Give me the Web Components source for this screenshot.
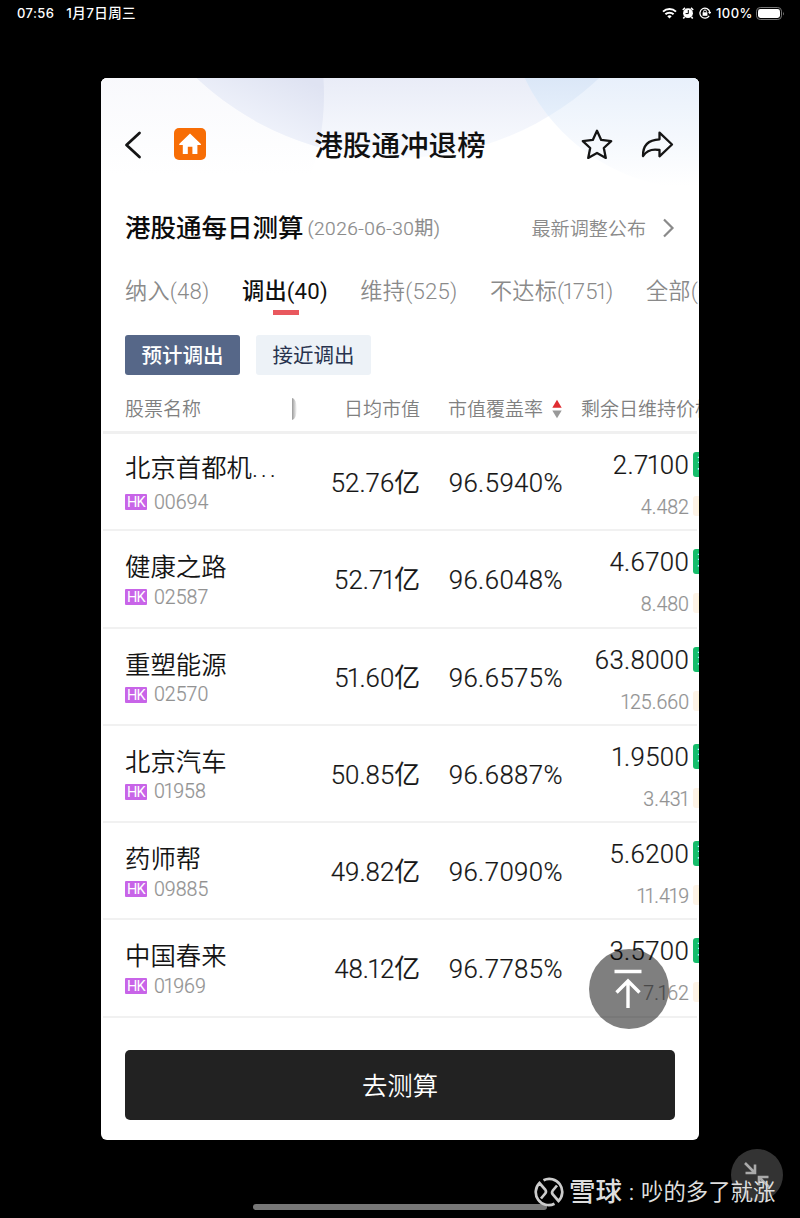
<!DOCTYPE html>
<html lang="zh-CN">
<head>
<meta charset="utf-8">
<title>港股通冲退榜</title>
<style>
  body {
    margin: 0;
    background: #000;
    font-family: Roboto, "Noto Sans CJK SC", sans-serif;
  }
</style>
</head>
<body>
<tablet-screen></tablet-screen>

<script>
const STOCKS = [
  { name: '北京首都机...', code: '00694', cap: '52.76亿', rate: '96.5940%', price: '2.7100', limit: '4.482' },
  { name: '健康之路', code: '02587', cap: '52.71亿', rate: '96.6048%', price: '4.6700', limit: '8.480' },
  { name: '重塑能源', code: '02570', cap: '51.60亿', rate: '96.6575%', price: '63.8000', limit: '125.660' },
  { name: '北京汽车', code: '01958', cap: '50.85亿', rate: '96.6887%', price: '1.9500', limit: '3.431' },
  { name: '药师帮', code: '09885', cap: '49.82亿', rate: '96.7090%', price: '5.6200', limit: '11.419' },
  { name: '中国春来', code: '01969', cap: '48.12亿', rate: '96.7785%', price: '3.5700', limit: '7.162' }
];

// shared by the table head and the rows
const TABLE_COLUMNS = '160px 135px 143px 126px 28px';

// proportional ones: pull the neighbours of each 1 closer
const NARROW_ONE = '.one { margin: 0 -0.06em 0 -0.07em; }';
const narrowOnes = (text) => text.replace(/1/g, '<span class="one">1</span>');

function define (name, html, setup) {
  const template = document.createElement('template');
  template.innerHTML = html;
  window.customElements.define(name, class extends HTMLElement {
    constructor () {
      super();
      this.attachShadow({ mode: 'open' });
      this.shadowRoot.appendChild(template.content.cloneNode(true));
    }
    connectedCallback () {
      if (setup) setup(this, this.shadowRoot);
    }
  });
}

define('status-bar', `
  <style>
    :host { display: flex; align-items: center; justify-content: space-between; height: 26px; padding: 0 15px 0 17px; color: #fff; font: 500 13px/26px Inter, "Noto Sans CJK SC", sans-serif; }
    div { display: flex; align-items: center; }
    .left { gap: 12px; letter-spacing: 0.4px; }
    .date { font-size: 13.5px; }
    .right { gap: 5px; }
    .percent { letter-spacing: 0.5px; }
    svg { display: block; }
    .battery { margin-left: -2px; }
  </style>
  <div class="left"><span>07:56</span><span class="date">1月7日周三</span></div>
  <div class="right">
    <svg width="15" height="12" viewBox="0 0 15 12" fill="none" stroke="#fff" stroke-width="2">
      <path d="M1 4.6a9.3 9.3 0 0 1 13 0M3.4 7.3a5.9 5.9 0 0 1 8.2 0"/><path d="M7.5 11.4 5.3 9.2a3.2 3.2 0 0 1 4.4 0z" fill="#fff" stroke="none"/>
    </svg>
    <svg width="12" height="12" viewBox="0 0 12 12">
      <circle cx="6" cy="6.2" r="4.9" fill="#fff"/><path d="M.8 3 3 .9M11.2 3 9 .9M2.5 10 1.3 11.5M9.5 10l1.2 1.5" stroke="#fff" stroke-width="1.6"/><path d="M6.3 3v3.6H3.6" stroke="#000" fill="none"/>
    </svg>
    <svg width="12" height="12" viewBox="0 0 12 12" fill="none" stroke="#fff">
      <path d="M10.2 8.8a5 5 0 1 1 .6-3.8" stroke-width="1.3"/><path d="m9 5 1.8 2.2L12.2 5z" fill="#fff" stroke="none"/><path d="M3.6 5.3h4.8v3.5H3.6z" fill="#fff" stroke="none"/><path d="M4.6 5.5V4.4a1.4 1.4 0 0 1 2.8 0v1.1"/>
    </svg>
    <span class="percent">100%</span>
    <svg class="battery" width="29" height="13" viewBox="0 0 29 13">
      <rect x=".5" y=".5" width="25" height="12" rx="3.7" fill="none" stroke="#777"/><rect x="2" y="2" width="22" height="9" rx="2.4" fill="#fff"/><path d="M27 4.5q1.7 2 0 4z" fill="#777"/>
    </svg>
  </div>
`);

define('nav-bar', `
  <style>
    :host { position: relative; display: block; height: 134px; }
    .glow { position: absolute; top: 0; left: 0; }
    nav { position: relative; display: grid; grid-template-columns: 190px 1fr 190px; align-items: center; height: 134px; }
    .left, .right { display: flex; align-items: center; }
    .left { padding-left: 22px; gap: 30px; }
    .right { justify-content: flex-end; gap: 26px; padding-right: 25px; }
    h1 { margin: 0; padding-top: 2px; text-align: center; font-size: 28.6px; font-weight: 500; line-height: 40px; color: #111; white-space: nowrap; }
    svg { display: block; }
    .home { margin-top: -2px; }
  </style>
  <svg class="glow" width="598" height="134" viewBox="101 78 598 134">
    <defs>
      <linearGradient id="base" x2="0" y2="1"><stop stop-color="#f1f1f9"/><stop offset=".3" stop-color="#f3f4fa"/><stop offset=".66" stop-color="#fff"/></linearGradient>
      <linearGradient id="mid" gradientUnits="userSpaceOnUse" x1="400" y1="78" x2="400" y2="160"><stop stop-color="#e9ecf7"/><stop offset="1" stop-color="#fafcff"/></linearGradient>
      <linearGradient id="lens" gradientUnits="userSpaceOnUse" x1="300" y1="78" x2="270" y2="150"><stop stop-color="#dfe3f2"/><stop offset="1" stop-color="#f3f6fd"/></linearGradient>
      <linearGradient id="side" gradientUnits="userSpaceOnUse" x1="600" y1="78" x2="600" y2="186"><stop stop-color="#e8f0fb"/><stop offset="1" stop-color="#fff"/></linearGradient>
      <linearGradient id="cross" gradientUnits="userSpaceOnUse" x1="550" y1="78" x2="550" y2="124"><stop stop-color="#dbe7f7"/><stop offset="1" stop-color="#e8f1fc"/></linearGradient>
      <clipPath id="leftClip"><circle cx="74" cy="95" r="250"/></clipPath>
      <clipPath id="rightClip"><circle cx="700" cy="-5" r="194"/></clipPath>
    </defs>
    <path d="M101 78h598v134H101z" fill="#fff"/>
    <circle cx="74" cy="95" r="250" fill="url(#base)"/>
    <path d="M101 140h260v72H101z" fill="#fff" opacity=".2"/>
    <circle cx="398" cy="-135" r="293" fill="url(#mid)"/>
    <circle cx="398" cy="-135" r="293" fill="url(#lens)" clip-path="url(#leftClip)"/>
    <circle cx="700" cy="-5" r="194" fill="url(#side)"/>
    <circle cx="398" cy="-135" r="293" fill="url(#cross)" clip-path="url(#rightClip)"/>
  </svg>
  <nav>
    <div class="left">
      <svg width="21" height="28" viewBox="0 0 21 28" fill="none" stroke="#151515" stroke-width="2.8" stroke-linecap="round" stroke-linejoin="round"><path d="M16.5 2 3.5 14l13 12"/></svg>
      <svg class="home" width="32" height="32" viewBox="0 0 32 32"><rect width="32" height="32" rx="5" fill="#f76d05"/><path d="M16 5.5 5.2 16q-.5 1 .6 1h3v9h5v-7.3h4.6V26h5v-9h3q1 0 .5-1z" fill="#fff"/></svg>
    </div>
    <h1>港股通冲退榜</h1>
    <div class="right">
      <svg width="34" height="34" viewBox="0 0 34 34" fill="none" stroke="#151515" stroke-width="2.3" stroke-linejoin="round"><path d="m17 2.700 4.200 9.200 10 1.200-7.400 6.900 2 9.900-8.800-4.900-8.800 4.900 2-9.900-7.400-6.900 10-1.200z"/></svg>
      <svg width="34" height="30" viewBox="0 0 34 30" fill="none" stroke="#151515" stroke-width="2.3" stroke-linejoin="round"><path d="M19.500 2.700 32 14.500 19.500 26.300V20Q8.500 17.800 3 26 2.600 10 19.500 9.300z"/></svg>
    </div>
  </nav>
`);

define('section-title', `
  <style>
    :host { display: flex; align-items: center; height: 32px; padding: 0 24px; color: #8a8a8a; font-size: 19.1px; font-weight: 350; white-space: nowrap; }
    h2 { margin: 0 4px 0 0; color: #0c0c0c; font-size: 25.5px; font-weight: 500; line-height: 32px; }
    .date { flex: 1; padding-top: 1px; letter-spacing: 0.45px; line-height: 32px; -webkit-text-stroke: 0.2px; }
    svg { margin-left: 15px; }
  </style>
  <h2><slot></slot></h2>
  <span class="date"><slot name="date"></slot></span>
  <slot name="link"></slot>
  <svg width="14" height="20" viewBox="0 0 14 20" fill="none" stroke="#8a8a8a" stroke-width="2.2"><path d="m3 1.500 8.500 8.500L3 18.500"/></svg>
`);

define('tab-strip', `
  <style>
    :host { display: flex; gap: 32.5px; height: 62px; margin: 16px 0 0 24px; overflow: hidden; font-size: 22.2px; font-weight: 350; letter-spacing: 0.2px; line-height: 62px; color: #8a8a8a; white-space: nowrap; }
  </style>
  <slot></slot>
`);

define('tab-item', `
  <style>
    :host { display: flex; flex: none; flex-direction: column; align-items: center; }
    :host([active]) { color: #111; font-weight: 450; }
    .label { height: 50px; }
    :host([active]) .bar { width: 26px; height: 5px; margin-left: 2px; background: #e9585e; }
    .one { margin: 0 -0.09em 0 -0.1em; }
  </style>
  <span class="label"></span><span class="bar"></span>
`, (el, root) => {
  root.querySelector('.label').innerHTML = narrowOnes(el.getAttribute('label'));
});

define('filter-chip', `
  <style>
    :host { display: block; width: 115px; height: 40px; border-radius: 3px; background: #edf2f7; color: #28324e; font-size: 20.5px; line-height: 43px; text-align: center; white-space: nowrap; }
    :host([active]) { background: #566788; color: #fff; font-weight: 500; }
  </style>
  <slot></slot>
`);

define('table-head', `
  <style>
    :host { display: grid; grid-template-columns: ${ TABLE_COLUMNS }; align-items: center; height: 59px; margin: 0 2px; padding: 12px 0 0 22px; box-sizing: border-box; border-bottom: 3px solid #f0f0f0; color: #808080; font-size: 19px; font-weight: 350; line-height: 44px; white-space: nowrap; }
    span { padding-top: 1px; }
    .cap { display: flex; align-items: center; justify-content: space-between; }
    .edge { width: 5px; height: 22px; margin: -2px 0 0 7px; background: linear-gradient(90deg, #999, #fff); border-radius: 0 100% 100% 0 / 0 50% 50% 0; }
    .rate { display: flex; align-items: center; justify-content: flex-end; gap: 9px; padding-right: 1px; }
    svg { margin-top: -3px; }
    .price { padding-left: 18px; }
  </style>
  <span>股票名称</span>
  <span class="cap"><i class="edge"></i>日均市值</span>
  <span class="rate">市值覆盖率<svg width="10" height="20" viewBox="0 0 10 20"><path d="m5 .8 4.700 8H.3z" fill="#e02d32"/><path d="m5 19.200 4.700-7.700H.3z" fill="#999"/></svg></span>
  <span class="price">剩余日维持价格</span>
`);

define('stock-row', `
  <style>
    :host { display: grid; grid-template-columns: ${ TABLE_COLUMNS }; height: 97.25px; margin: 0 2px; padding-left: 22px; box-sizing: border-box; border-bottom: 2px solid #f1f1f1; color: #151515; font-size: 25.8px; font-weight: 350; white-space: nowrap; }
    .stock { padding-top: 20px; }
    .name { font-size: 25.4px; line-height: 32px; }
    .dots { letter-spacing: 2.8px; }
    .id { display: flex; align-items: center; height: 20px; margin-top: 4px; gap: 7px; color: #929292; font-size: 19.6px; line-height: 20px; }
    :host(:first-of-type) .stock { padding-top: 18px; }
    :host(:first-of-type) .id { margin-top: 8px; }
    .code { padding-top: 1px; }
    .hk { width: 22px; height: 16px; border-radius: 1px; background: #c864e8; color: #fff; font-size: 14.5px; font-weight: 400; letter-spacing: -0.6px; line-height: 17px; text-align: center; }
    .number, .price, .limit, .code { -webkit-text-stroke: 0.2px; }
    .number { text-align: right; line-height: 99px; }
    .rate { letter-spacing: 0.4px; }
    .prices { padding-top: 12px; text-align: right; }
    .price { letter-spacing: 0.3px; line-height: 38px; }
    .limit { margin-top: 8px; color: #929292; font-size: 19.6px; line-height: 32px; }
    .marks { padding: 18px 0 0 4px; }
    .mark { width: 25px; height: 25px; border-radius: 3px; background: #16bd6b; color: #fff; font-size: 17px; font-weight: 400; line-height: 25px; text-align: center; }
    .mark.last { height: 20px; margin-top: 19px; background: #fdf3e6; color: #a06b3c; font-size: 15px; line-height: 20px; }
    ${ NARROW_ONE }
  </style>
  <div class="stock">
    <div class="name"></div>
    <div class="id"><span class="hk">HK</span><span class="code"></span></div>
  </div>
  <div class="number cap"></div>
  <div class="number rate"></div>
  <div class="prices"><div class="price"></div><div class="limit"></div></div>
  <div class="marks"><div class="mark">现</div><div class="mark last">限</div></div>
`, (el, root) => {
  const stock = el.stock;
  root.querySelector('.name').innerHTML = stock.name.replace('...', '<span class="dots">...</span>');
  ['code', 'cap', 'rate', 'price', 'limit'].forEach((key) => {
    root.querySelector(`.${ key }`).innerHTML = narrowOnes(stock[key]);
  });
});

define('stock-table', `
  <style>
    :host { display: block; }
  </style>
  <table-head></table-head>
  <section></section>
`, (el, root) => {
  STOCKS.forEach((stock) => {
    const row = document.createElement('stock-row');
    row.stock = stock;
    root.querySelector('section').appendChild(row);
  });
});

define('action-button', `
  <style>
    :host { display: block; margin: 32.5px 24px 0; }
    button { display: block; width: 100%; height: 70px; padding: 0; border: 0; border-radius: 5px; background: #222; color: #fff; font: 350 25.4px/73px Roboto, "Noto Sans CJK SC", sans-serif; }
  </style>
  <button><slot></slot></button>
`);

define('back-to-top', `
  <style>
    :host { position: absolute; left: 488px; top: 871px; width: 80px; height: 80px; border-radius: 50%; background: rgba(0, 0, 0, 0.5); }
    svg { display: block; }
  </style>
  <svg width="80" height="80" viewBox="0 0 80 80" fill="none" stroke="#fff" stroke-width="3.4"><path d="M25.500 22.500h27M39 59V32M27.500 43.500 39 32 50.500 43.500"/></svg>
`);

define('app-card', `
  <style>
    :host { position: relative; display: block; width: 598px; height: 1062px; margin: 52px auto 0; overflow: hidden; border-radius: 6px; background: #fff; }
    .chips { display: flex; gap: 16px; margin: 13px 0 0 24px; }
  </style>
  <nav-bar></nav-bar>
  <section-title>港股通每日测算<span slot="date">(2026-06-30期)</span><span slot="link">最新调整公布</span></section-title>
  <tab-strip>
    <tab-item label="纳入(48)"></tab-item>
    <tab-item label="调出(40)" active></tab-item>
    <tab-item label="维持(525)"></tab-item>
    <tab-item label="不达标(1751)"></tab-item>
    <tab-item label="全部(2364)"></tab-item>
  </tab-strip>
  <div class="chips"><filter-chip active>预计调出</filter-chip><filter-chip>接近调出</filter-chip></div>
  <stock-table></stock-table>
  <action-button>去测算</action-button>
  <back-to-top></back-to-top>
`);

// floats over the bottom edge of the screen
define('screen-overlay', `
  <style>
    .home { position: absolute; left: 253px; top: 1204px; width: 294px; height: 6px; border-radius: 3px; background: #777; }
    .shrink { position: absolute; left: 731px; top: 1149px; width: 52px; height: 52px; border-radius: 50%; background: #333; }
    .credit { position: absolute; left: 534px; top: 1176px; display: flex; align-items: center; height: 32px; color: #ddd; font-size: 22.4px; line-height: 32px; white-space: nowrap; }
    .brand { margin-left: 5px; font-size: 26.5px; font-weight: 500; }
    .colon { width: 19px; text-align: center; }
  </style>
  <div class="home"></div>
  <svg class="shrink" viewBox="0 0 52 52" fill="none" stroke="#aaa" stroke-width="2.6"><path d="m14 14 9 9M24 15.500V24h-9.500M38 38l-9-9M28 36.500V28h9.500"/></svg>
  <div class="credit">
    <svg width="30" height="30" viewBox="0 0 30 30" fill="none" stroke="#ccc" stroke-width="2.7"><path d="M9.500 3.200A13 13 0 0 1 24.500 24L18.800 17.500q-1.500-2 0-4l4.200-5M20.500 26.800A13 13 0 0 1 5.500 6l5.700 6.500q1.500 2 0 4L7 21.500"/></svg>
    <span class="brand">雪球</span><span class="colon">:</span><span>吵的多了就涨</span>
  </div>
`);

define('tablet-screen', `
  <style>
    :host { position: relative; display: block; height: 1218px; overflow: hidden; background: #000; }
  </style>
  <status-bar></status-bar>
  <app-card></app-card>
  <screen-overlay></screen-overlay>
`);
</script>
</body>
</html>
